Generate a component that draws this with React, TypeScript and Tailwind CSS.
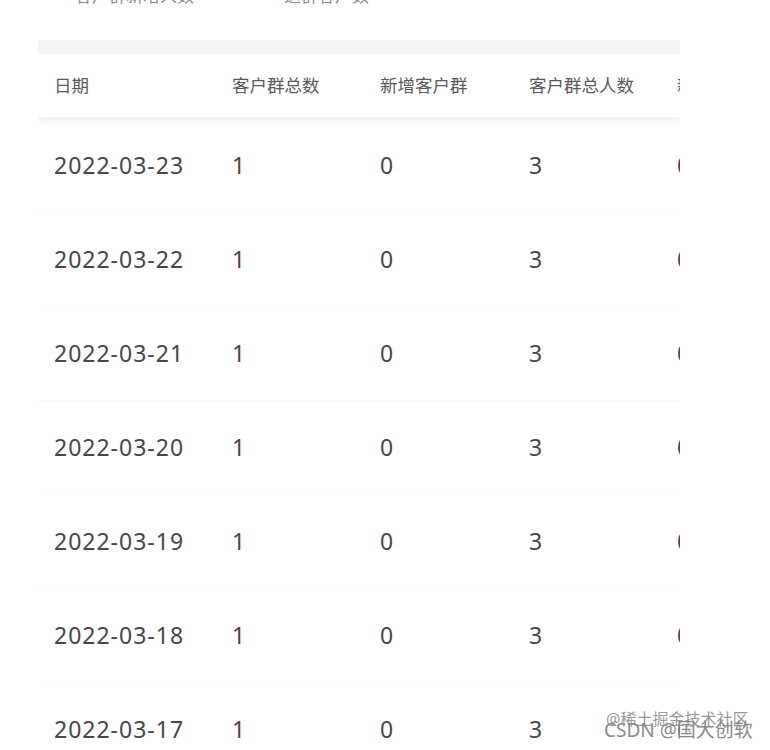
const columns = ["日期", "客户群总数", "新增客户群", "客户群总人数", "新增客户群人数"];

const rows = [
  "2022-03-23",
  "2022-03-22",
  "2022-03-21",
  "2022-03-20",
  "2022-03-19",
  "2022-03-18",
  "2022-03-17",
];

const widths = ["w-[194px] pl-4", "w-[148px]", "w-[149px]", "w-[148px]", "w-[148px]"];

export default function App() {
  return (
    <div className="relative h-[750px] w-[770px] overflow-hidden bg-white font-['Noto_Sans','Noto_Sans_CJK_SC',sans-serif] text-[#4a4a4a]">
      {/* tabs cut off at top */}
      <div className="-mt-[15px] flex h-[22px] text-[17px] leading-[22px] text-[#8a8a8a]">
        <span className="ml-[75px]">客户群新增人数</span>
        <span className="ml-[90px]">退群客户数</span>
      </div>

      <div className="ml-[38px] mt-[33px] w-[642px] overflow-hidden">
        <div className="h-[14px] bg-[#f4f5f6]" />
        <div className="flex h-[63px] items-center bg-white text-[17.5px] text-[#5a5a5a] shadow-[0_4px_6px_rgba(0,0,0,0.06)]">
          {columns.map((c, i) => (
            <div key={c} className={`${widths[i]} shrink-0 whitespace-nowrap`}>
              {c}
            </div>
          ))}
        </div>
        {rows.map((d, idx) => (
          <div
            key={d}
            className={`flex h-[94px] items-center text-[23px] tracking-[1px] text-[#474747] ${
              idx === 0 ? "mt-[1px]" : "border-t border-[#fafafa]"
            }`}
          >
            <div className={`${widths[0]} shrink-0`}>{d}</div>
            <div className={`${widths[1]} shrink-0`}>1</div>
            <div className={`${widths[2]} shrink-0`}>0</div>
            <div className={`${widths[3]} shrink-0`}>3</div>
            <div className={`${widths[4]} shrink-0`}>0</div>
          </div>
        ))}
      </div>

      {/* watermark */}
      <div className="absolute left-[606px] top-[709px] text-[16px] leading-[20px] text-[#9a9a9a]">
        @稀土掘金技术社区
      </div>
      <div className="absolute left-[604px] top-[718px] text-[19px] leading-[24px] text-[#8a8a8a]">
        CSDN @国大创软
      </div>
    </div>
  );
}
